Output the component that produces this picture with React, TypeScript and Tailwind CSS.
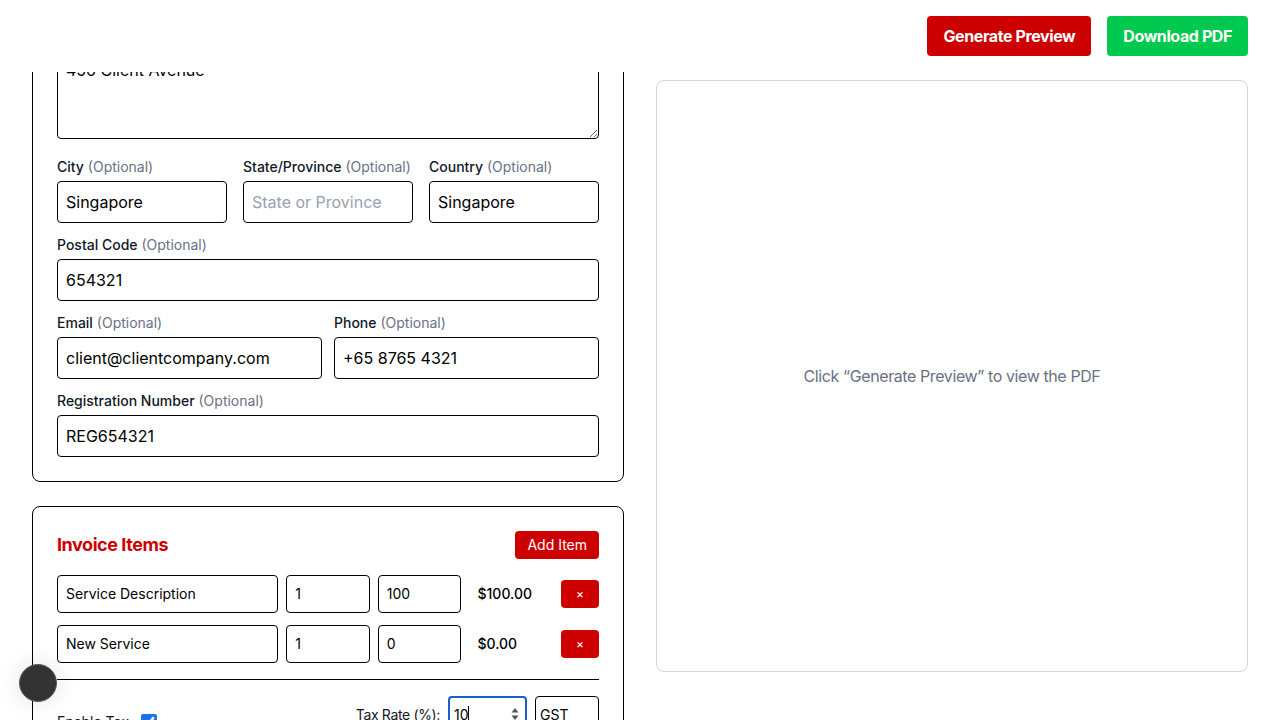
import React from 'react';

const Label = ({ text, optional }: { text: string; optional?: boolean }) => (
  <label className="mb-1 block text-sm font-medium leading-5 text-gray-900">
    {text}
    {optional && <span className="font-normal text-gray-500"> (Optional)</span>}
  </label>
);

const fieldClass =
  'block w-full rounded border border-black px-2 py-2 text-base leading-6 text-black placeholder:text-gray-400';

const Field = ({
  label,
  value,
  placeholder,
  optional,
}: {
  label: string;
  value?: string;
  placeholder?: string;
  optional?: boolean;
}) => (
  <div>
    <Label text={label} optional={optional} />
    <input className={fieldClass} defaultValue={value} placeholder={placeholder} />
  </div>
);

const items = [
  { description: 'Service Description', qty: '1', price: '100', amount: '$100.00' },
  { description: 'New Service', qty: '1', price: '0', amount: '$0.00' },
];

const itemInput = 'w-full rounded border border-black px-2 py-2 text-sm leading-5 text-black';

export default function App() {
  return (
    <div className="flex h-screen flex-col overflow-hidden bg-white font-['Inter',sans-serif] text-gray-900">
      <header className="relative z-10 flex h-[72px] shrink-0 items-center justify-end gap-4 bg-white px-8">
        <button className="h-10 rounded bg-[#cc0000] px-4 text-base font-bold tracking-tight text-white">Generate Preview</button>
        <button className="h-10 rounded bg-[#00c950] px-4 text-base font-bold tracking-tight text-white">Download PDF</button>
      </header>

      <main className="grid flex-1 grid-cols-2 gap-8 overflow-hidden px-8">
        <div className="-mt-[272px] space-y-6">
          <section className="rounded-lg border border-black p-6">
            <h2 className="mb-4 text-xl font-bold leading-7 text-[#cc0000]">Client Information</h2>
            <div className="space-y-3">
              <Field label="Client Name" value="Jane Client" />
              <Field label="Company Name" value="Client Company Pte Ltd" optional />
              <div className="pb-[6px]">
                <Label text="Address" />
                <textarea
                  className="block h-[90px] w-full rounded border border-black px-2 py-2 text-base leading-6 text-black"
                  rows={3}
                  defaultValue="456 Client Avenue"
                />
              </div>
              <div className="grid grid-cols-3 gap-4">
                <Field label="City" value="Singapore" optional />
                <Field label="State/Province" placeholder="State or Province" optional />
                <Field label="Country" value="Singapore" optional />
              </div>
              <Field label="Postal Code" value="654321" optional />
              <div className="grid grid-cols-2 gap-3">
                <Field label="Email" value="client@clientcompany.com" optional />
                <Field label="Phone" value="+65 8765 4321" optional />
              </div>
              <Field label="Registration Number" value="REG654321" optional />
            </div>
          </section>

          <section className="rounded-lg border border-black p-6">
            <div className="mb-4 flex items-center justify-between">
              <h2 className="text-lg font-bold tracking-tight text-[#cc0000]">Invoice Items</h2>
              <button className="h-7 rounded bg-[#cc0000] px-3 text-sm text-white">Add Item</button>
            </div>

            <div className="space-y-3">
              {items.map((item) => (
                <div key={item.description} className="grid grid-cols-12 items-center gap-2">
                  <input className={`col-span-5 ${itemInput}`} defaultValue={item.description} />
                  <input className={`col-span-2 ${itemInput}`} defaultValue={item.qty} />
                  <input className={`col-span-2 ${itemInput}`} defaultValue={item.price} />
                  <span className="col-span-2 pl-2 text-sm font-medium text-black">{item.amount}</span>
                  <button className="col-span-1 h-7 w-full rounded bg-[#cc0000] text-xs text-white">×</button>
                </div>
              ))}
            </div>

            <div className="mt-4 flex items-start justify-between border-t border-black pt-4">
              <label className="mt-4 flex items-center gap-3 text-sm leading-5 text-gray-900">
                Enable Tax
                <input type="checkbox" defaultChecked className="h-4 w-4 accent-[#1a73e8]" />
              </label>
              <div className="flex flex-col items-end gap-2">
                <div className="flex items-center gap-2">
                  <span className="text-sm tracking-tight text-gray-900">Tax Rate (%):</span>
                  <div className="relative w-[79px]">
                    <input
                      className="w-full rounded border-2 border-[#1a5fc9] py-[7px] pl-[4px] pr-5 text-sm leading-5 text-black"
                      defaultValue="10"
                    />
                    <span className="pointer-events-none absolute left-[20px] top-[10px] h-[16px] w-px bg-black" />
                    <svg className="pointer-events-none absolute right-[8px] top-[11px]" width="8" height="14" viewBox="0 0 8 14">
                      <path d="M4 1 L7.5 5.5 H0.5 Z" fill="#555" />
                      <path d="M4 13 L7.5 8.5 H0.5 Z" fill="#555" />
                    </svg>
                  </div>
                  <input className="w-16 rounded border border-black px-1 py-2 text-sm leading-5 text-black" defaultValue="GST" />
                </div>
                <span className="text-sm text-gray-900">Tax Amount: $10.00</span>
              </div>
            </div>

            <div className="mt-6 space-y-2 text-sm">
              <div className="flex justify-between"><span>Subtotal</span><span>$100.00</span></div>
              <div className="flex justify-between"><span>GST (10%)</span><span>$10.00</span></div>
              <div className="flex justify-between font-bold"><span>Total</span><span>$110.00</span></div>
            </div>
          </section>
        </div>

        <div className="pt-2">
          <div className="flex h-[592px] items-center justify-center rounded-lg border border-gray-300 bg-white">
            <p className="text-base tracking-tight text-gray-500">Click “Generate Preview” to view the PDF</p>
          </div>
        </div>
      </main>

      <div className="fixed bottom-[18px] left-[19px] h-[38px] w-[38px] rounded-full border border-[#5a5a5a] bg-[#333333] shadow-[0_0_24px_rgba(0,0,0,0.12)]" />
    </div>
  );
}
